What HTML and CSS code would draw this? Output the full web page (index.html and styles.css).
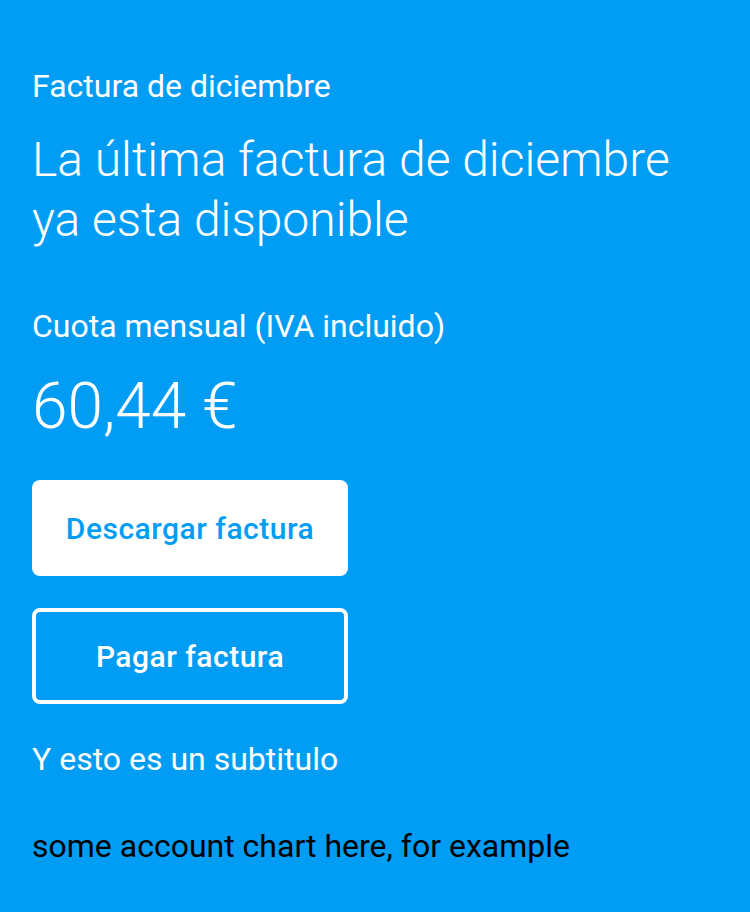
FILE: index.html
```html
<!DOCTYPE html>
<html lang="es">
<head>
<meta charset="utf-8">
<link rel="stylesheet" href="styles.css">
</head>
<body>
<main class="card">
  <p class="overline">Factura de diciembre</p>
  <h1 class="title">La última factura de diciembre ya esta disponible</h1>
  <p class="label">Cuota mensual (IVA incluido)</p>
  <p class="amount">60,44 €</p>
  <div class="actions">
    <button class="btn btn-primary">Descargar factura</button>
    <button class="btn btn-secondary">Pagar factura</button>
  </div>
  <p class="subtitle">Y esto es un subtitulo</p>
  <p class="chart">some account chart here, for example</p>
</main>
</body>
</html>
```
FILE: styles.css
```css
html, body {
  margin: 0;
  padding: 0;
  background: #019df4;
  height: 100%;
}
body {
  font-family: Roboto, "Noto Sans", sans-serif;
  color: #fff;
}
.card {
  padding: 64px 32px 32px;
  display: flex;
  flex-direction: column;
  align-items: flex-start;
}
p, h1 { margin: 0; }
.overline {
  font-size: 32px;
  line-height: 44px;
  font-weight: 400;
}
.title {
  font-size: 48px;
  line-height: 60px;
  font-weight: 300;
  margin-top: 22px;
  max-width: 660px;
}
.label {
  font-size: 32px;
  line-height: 44px;
  margin-top: 54px;
}
.amount {
  font-size: 64px;
  line-height: 80px;
  font-weight: 300;
  margin-top: 19px;
}
.actions {
  display: flex;
  flex-direction: column;
  gap: 32px;
  margin-top: 33px;
}
.btn {
  width: 316px;
  height: 96px;
  border-radius: 8px;
  font-family: Roboto, sans-serif;
  font-size: 30px;
  letter-spacing: 0.5px;
  font-weight: 500;
  box-sizing: border-box;
  padding: 0;
  cursor: pointer;
}
.btn-primary {
  background: #fff;
  color: #019df4;
  border: none;
}
.btn-secondary {
  background: transparent;
  color: #fff;
  border: 4px solid #fff;
}
.subtitle {
  font-size: 32px;
  line-height: 44px;
  margin-top: 33px;
}
.chart {
  font-size: 32px;
  line-height: 44px;
  color: #000;
  margin-top: 43px;
}
```
